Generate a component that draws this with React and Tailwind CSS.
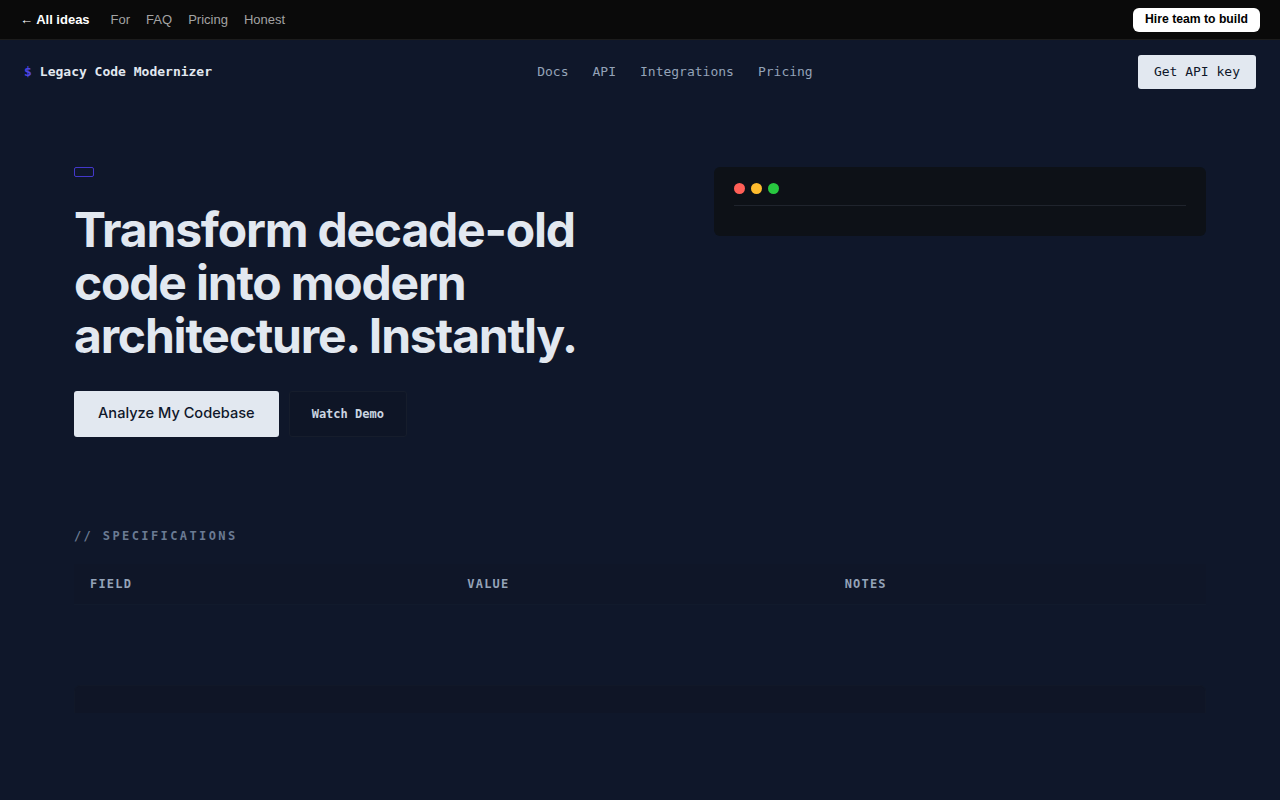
import React from 'react';

const mono = { fontFamily: '"DejaVu Sans Mono", "Liberation Mono", monospace' };

function TopBar() {
  return (
    <div className="h-10 bg-[#0a0a0a] border-b border-[#1c1c1c] flex items-center justify-between px-5" style={{ fontFamily: '"Liberation Sans", Arial, sans-serif' }}>
      <div className="flex items-center gap-4 text-[13px]">
        <a className="text-white font-bold mr-[5px]">← All ideas</a>
        <a className="text-[#a3a3a3]">For</a>
        <a className="text-[#a3a3a3]">FAQ</a>
        <a className="text-[#a3a3a3]">Pricing</a>
        <a className="text-[#a3a3a3]">Honest</a>
      </div>
      <button className="bg-white text-black font-bold text-[12.2px] rounded-md h-6 px-[12px]">Hire team to build</button>
    </div>
  );
}

function Nav() {
  return (
    <div className="flex items-center justify-between px-6 pt-[15px] pb-[14px]" style={mono}>
      <div className="flex items-center gap-2 text-[13px] font-bold text-[#e2e8f0] w-[240px]">
        <span className="text-[#4f46e5]">$</span>
        <span>Legacy Code Modernizer</span>
      </div>
      <div className="flex items-center gap-6 text-[13px] text-[#94a3b8] mr-[52px]">
        <a>Docs</a>
        <a>API</a>
        <a>Integrations</a>
        <a>Pricing</a>
      </div>
      <button className="bg-[#e2e8f0] text-[#0f172a] text-[13px] rounded-[3px] h-[34px] px-4">Get API key</button>
    </div>
  );
}

function Hero() {
  return (
    <div className="grid grid-cols-[1fr_492px] gap-10 pt-[64px]">
      <div>
        <div className="w-5 h-[10px] border border-[#4338ca] rounded-[2px]" />
        <h1 className="mt-[26px] text-[48px] leading-[53px] font-bold tracking-[-0.025em] text-[#e2e8f0]" style={{ fontFamily: 'Inter, sans-serif' }}>
          Transform decade-old code into modern architecture. Instantly.
        </h1>
        <div className="flex items-center gap-[10px] mt-[29px]">
          <button className="h-[46px] px-6 bg-[#e2e8f0] text-[#0f172a] rounded-[3px] text-[14.6px] font-medium" style={{ fontFamily: 'Inter, sans-serif' }}>
            Analyze My Codebase
          </button>
          <button className="h-[46px] px-[22px] border border-[#161d2c] bg-[#0e1526] text-[#cbd5e1] rounded-[3px] text-[12px] font-bold" style={mono}>
            Watch Demo
          </button>
        </div>
      </div>
      <div>
        <div className="bg-[#0d1117] rounded-md px-5 pt-[16px] pb-[30px]">
          <div className="flex items-center gap-[6px]">
            <span className="w-[11px] h-[11px] rounded-full bg-[#ff5f57]" />
            <span className="w-[11px] h-[11px] rounded-full bg-[#febc2e]" />
            <span className="w-[11px] h-[11px] rounded-full bg-[#28c840]" />
          </div>
          <div className="mt-[11px] border-t border-[#1f242d]" />
        </div>
      </div>
    </div>
  );
}

function Specs() {
  return (
    <div className="mt-[90px]" style={mono}>
      <div className="text-[12px] font-bold tracking-[0.2em] text-[#6b7b93]">// SPECIFICATIONS</div>
      <div className="mt-[19px]">
        <div className="grid grid-cols-3 bg-[#0f1628] h-[41px] items-center text-[12px] font-bold tracking-[0.1em] text-[#94a3b8] border-b border-[#111a2c]">
          <div className="px-4">FIELD</div>
          <div className="px-4">VALUE</div>
          <div className="px-4">NOTES</div>
        </div>
        <div className="h-[80px]" />
        <div className="h-[28px] bg-[#0f1526] border border-b-0 border-[#111828] rounded-t-[6px]" />
      </div>
    </div>
  );
}

export default function App() {
  return (
    <div className="min-h-[800px] bg-[#0f172a]">
      <TopBar />
      <Nav />
      <div className="px-[74px]">
        <Hero />
        <Specs />
      </div>
    </div>
  );
}
